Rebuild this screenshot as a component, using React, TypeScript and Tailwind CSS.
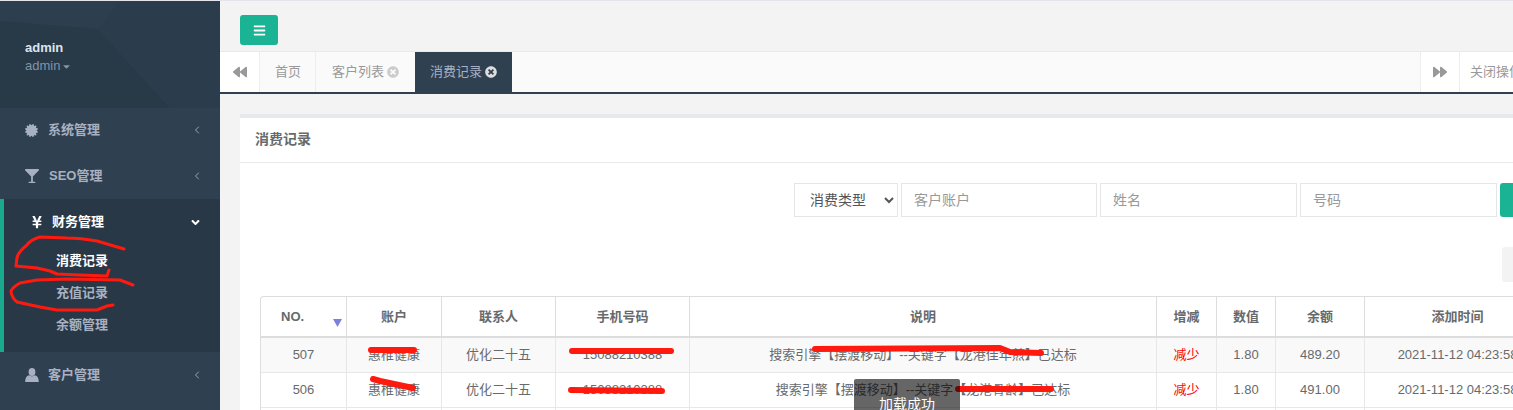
import {
  FaAngleDown,
  FaBackward,
  FaBars,
  FaCaretDown,
  FaCertificate,
  FaForward,
  FaGlassMartini,
  FaTimesCircle,
  FaYenSign,
} from 'react-icons/fa';
import { ChevronLeft } from 'lucide-react';

const font = "font-['Liberation_Sans','Noto_Sans_CJK_SC',sans-serif]";

const widths = [86, 95, 114, 134, 467, 60, 59, 89, 186];
const headers = ['NO.', '账户', '联系人', '手机号码', '说明', '增减', '数值', '余额', '添加时间'];

const rows = [
  ['507', '惠椎健康', '优化二十五', '15088210388', '搜索引擎【摆渡移动】--关键字【龙港佳年煎】已达标', '减少', '1.80', '489.20', '2021-11-12 04:23:58'],
  ['506', '惠椎健康', '优化二十五', '15088210388', '搜索引擎【摆渡移动】--关键字【龙港骨龄】已达标', '减少', '1.80', '491.00', '2021-11-12 04:23:58'],
];

const row3 = [0, 1, 2, 3, 4, 5, 6, 7, 8];

const UserIcon = () => (
  <svg width="14" height="14" viewBox="0 0 14 14" fill="currentColor">
    <ellipse cx="7" cy="4" rx="3.4" ry="4" />
    <path d="M4.4 7.2 C5.5 8.6 8.5 8.6 9.6 7.2 C12 7.6 13.6 9 13.8 14 L0.2 14 C0.4 9 2 7.6 4.4 7.2 Z" />
  </svg>
);

const App = () => {
  return (
    <div className={`${font} relative flex h-[410px] w-[1513px] overflow-hidden border-t border-[#e3e5ea] bg-[#f3f3f4] text-[13px] text-[#676a6c]`}>
      {/* sidebar */}
      <aside className="h-full w-[220px] shrink-0 bg-[#2f4050] font-semibold text-[#a7b1c2]">
        <div className="relative h-[107px] overflow-hidden bg-[#2d3e4e] pl-[25px] pt-[38px]">
          <svg className="absolute inset-0" width="220" height="107">
            <polygon points="0,20 98,28 170,107 0,107" fill="#283948" />
            <polygon points="98,28 120,0 220,0 220,107 170,107" fill="#2b3c4c" />
          </svg>
          <div className="relative text-[13px] font-bold leading-[18px] text-[#dfe4ed]">admin</div>
          <div className="relative flex items-center text-[13px] font-normal leading-[18px] text-[#8095a8]">
            admin
            <FaCaretDown className="ml-px size-[11px]" />
          </div>
        </div>
        <nav>
          <div className="flex h-[44px] items-center pl-[25px] pr-[17px]">
            <FaCertificate className="size-[13px]" />
            <span className="ml-[10px] flex-1">系统管理</span>
            <ChevronLeft size={12} strokeWidth={1.75} />
          </div>
          <div className="flex h-[47px] items-center pl-[25px] pr-[17px]">
            <FaGlassMartini className="size-[14px]" />
            <span className="ml-[10px] flex-1">SEO管理</span>
            <ChevronLeft size={12} strokeWidth={1.75} />
          </div>
          <div className="h-[153px] border-l-4 border-[#19aa8d] bg-[#293846]">
            <div className="flex h-[46px] items-center pl-[26px] pr-[18px] text-white">
              <FaYenSign className="size-[14px]" />
              <span className="ml-[8px] flex-1">财务管理</span>
              <FaAngleDown className="size-[13px]" />
            </div>
            <div className="flex h-[32px] items-center pl-[52px] text-white">消费记录</div>
            <div className="flex h-[32px] items-center pl-[52px]">充值记录</div>
            <div className="flex h-[32px] items-center pl-[52px]">余额管理</div>
          </div>
          <div className="flex h-[45px] items-center pl-[25px] pr-[17px]">
            <UserIcon />
            <span className="ml-[9px] flex-1">客户管理</span>
            <ChevronLeft size={12} strokeWidth={1.75} />
          </div>
        </nav>
      </aside>

      {/* main */}
      <main className="min-w-0 flex-1 overflow-hidden">
        <div className="flex h-[51px] items-start border-b border-[#e7eaec] pl-5 pt-[14px]">
          <button className="flex h-[30px] w-[38px] items-center justify-center rounded-[3px] bg-[#1ab394] text-white">
            <FaBars className="size-[13px]" />
          </button>
        </div>

        <div className="flex h-[42px] border-b-2 border-[#2f4050] bg-[#fafafa]">
          <button className="flex w-10 items-center justify-center border-r border-[#eeeeee] bg-white text-[#999999]">
            <FaBackward className="size-[14px]" />
          </button>
          <div className="flex w-[56px] items-center justify-center border-r border-[#eeeeee] pl-px text-[#999999]">首页</div>
          <div className="flex w-[99px] items-center justify-center text-[#999999]">
            客户列表
            <FaTimesCircle className="ml-[3px] size-[12px] text-[#cccccc]" />
          </div>
          <div className="flex w-[97px] items-center justify-center bg-[#2f4050] text-[#a7b1c2]">
            消费记录
            <FaTimesCircle className="ml-[3px] size-[12px] text-[#dddddd]" />
          </div>
          <div className="flex-1" />
          <button className="flex w-10 items-center justify-center border-x border-[#eeeeee] bg-white text-[#999999]">
            <FaForward className="size-[14px]" />
          </button>
          <div className="flex w-[53px] items-center overflow-hidden whitespace-nowrap bg-white pl-[10px] text-[#999999]">关闭操作</div>
        </div>

        <div className="px-5 pt-5">
          <section className="w-[1300px] border-t-4 border-[#e7eaec] bg-white">
            <h5 className="h-[45px] border-b border-[#e7eaec] px-[15px] pt-[11px] text-[14px] font-bold leading-[20px]">消费记录</h5>
            <div className="px-5 pt-5">
              <div className="flex h-[34px] gap-[3px] pl-[534px]">
                <select className="h-[34px] w-[104px] shrink-0 border border-[#e5e6e7] bg-white pl-[11px] text-[14px] text-[#555555]">
                  <option>消费类型</option>
                </select>
                <input className="h-[34px] w-[196px] shrink-0 border border-[#e5e6e7] px-3 text-[14px] placeholder:text-[#999999]" placeholder="客户账户" />
                <input className="h-[34px] w-[197px] shrink-0 border border-[#e5e6e7] px-3 text-[14px] placeholder:text-[#999999]" placeholder="姓名" />
                <input className="h-[34px] w-[197px] shrink-0 border border-[#e5e6e7] px-3 text-[14px] placeholder:text-[#999999]" placeholder="号码" />
                <button className="h-[34px] w-[50px] shrink-0 rounded-[3px] bg-[#1ab394]" />
              </div>
              <div className="mt-[30px] flex h-[35px] pl-[1242px]">
                <button className="h-[35px] w-[40px] shrink-0 rounded-[3px] bg-[#f3f3f3]" />
              </div>
              <table className="mt-[14px] w-[1290px] table-fixed border-separate border-spacing-0 overflow-hidden rounded-t-[4px] border-l border-t border-[#dddddd]">
                <colgroup>
                  {widths.map((w, i) => (
                    <col key={i} style={{ width: w }} />
                  ))}
                </colgroup>
                <thead>
                  <tr className="h-[41px]">
                    {headers.map((h, i) => (
                      <th key={h} className={`relative border-b-2 border-r border-[#dddddd] font-bold ${i === 0 ? 'pl-[20px] text-left' : 'text-center'}`}>
                        {h}
                        {i === 0 && (
                          <svg className="absolute bottom-[9px] right-[4px]" width="9" height="8">
                            <polygon points="0,0 9,0 4.5,8" fill="#7f7fdc" />
                          </svg>
                        )}
                      </th>
                    ))}
                  </tr>
                </thead>
                <tbody>
                  {rows.map((row, r) => (
                    <tr key={row[0]} className={`h-[35px] ${r === 0 ? 'bg-[#f9f9f9]' : 'bg-white'}`}>
                      {row.map((cell, i) => (
                        <td key={i} className={`whitespace-nowrap border-b border-r border-[#e7e7e7] text-center ${i === 5 ? 'text-[#ff0000]' : ''}`}>
                          {cell}
                        </td>
                      ))}
                    </tr>
                  ))}
                  <tr className="h-[35px]">
                    {row3.map((i) => (
                      <td key={i} className="border-r border-[#e7e7e7]" />
                    ))}
                  </tr>
                </tbody>
              </table>
            </div>
          </section>
        </div>
      </main>

      {/* red pen marks drawn on the screenshot */}
      <svg className="pointer-events-none absolute left-0 top-[-1px]" width="1513" height="410" fill="none" stroke="#ff1a10" strokeLinecap="round" strokeLinejoin="round">
        <g strokeWidth="3">
          <path d="M124 249 L97 241 Q80 238 67 238 L40 237 Q30 240 27 245 Q18 252 17 258 L16 266 L37 268 L50 271 L57 274 L80 275 L107 276 L109 270" />
          <path d="M133 285 L120 280 L67 279 L37 280 L20 283 Q11 288 11 292 Q12 298 17 302 L40 307 L57 310 L97 310 L107 306 L113 305" />
        </g>
        <g strokeWidth="6">
          <path d="M371 350 L414 350" />
          <path d="M572 351 L671 351" />
          <path d="M373 379 L380 381 L413 388" />
          <path d="M571 390 L662 391" />
          <path d="M815 349 L1000 348 L1010 352 L1041 353" />
          <path d="M958 389 L1051 389" />
        </g>
      </svg>

      {/* layer.msg toast */}
      <div className="absolute left-[854px] top-[378px] flex h-[48px] w-[106px] items-center justify-center rounded-[2px] bg-black/60 pt-[3px] text-[14px] text-white">
        加载成功
      </div>
    </div>
  );
};

export default App;
